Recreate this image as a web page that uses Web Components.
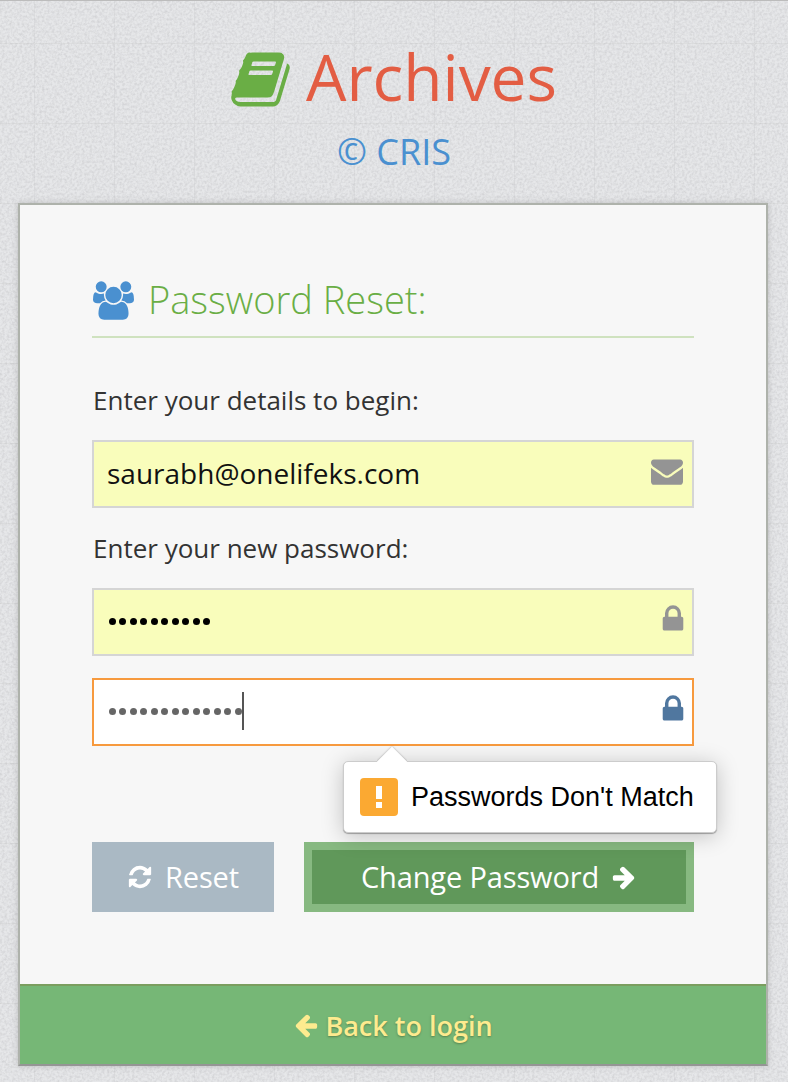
<!DOCTYPE html>
<html><head><meta charset="utf-8"><style>
html,body{margin:0;padding:0;height:100%}
body{font-family:"Open Sans",sans-serif}
</style></head><body>
<template id="t-ic"><style>:host{display:inline-flex;flex:none;line-height:0}svg{display:block;width:100%;height:100%;fill:currentColor}</style><svg><path></path></svg></template>
<template id="t-page"><style>
:host{display:block;box-sizing:border-box;width:788px;height:1082px;overflow:hidden;padding-top:1px;border-top:1px solid #bcbcbc;background-color:#e6e7e9;
background-image:url("data:image/svg+xml,%3Csvg xmlns='http://www.w3.org/2000/svg' width='400' height='400'%3E%3Cfilter id='n' x='0' y='0' width='100%25' height='100%25'%3E%3CfeTurbulence type='fractalNoise' baseFrequency='.4' numOctaves='2' stitchTiles='stitch'/%3E%3CfeColorMatrix values='0 0 0 0 .5 0 0 0 0 .5 0 0 0 0 .52 .9 0 0 0 -.32'/%3E%3C/filter%3E%3Crect width='400' height='400' filter='url(%23n)'/%3E%3C/svg%3E"),linear-gradient(#dddedf 1px,transparent 1px),linear-gradient(90deg,#dddee0 1px,transparent 1px);background-size:400px 400px,80px 80px,80px 80px;background-position:0 0,0 42px,34px 0}
</style><slot></slot></template>
<template id="t-brand"><style>
:host{display:flex;flex-direction:column;align-items:center;height:201px;box-sizing:border-box}
.row{display:flex;align-items:center;gap:14px;margin-top:29px;height:92px;color:#e35d43;font-size:64px;line-height:92px}
arc-icon{width:63px;height:63px;color:#6aae45;margin:4px 0 0 -2px}
.sub{color:#4a90d0;font-size:36px;line-height:48px;margin-top:5px}
</style><div class="row"><arc-icon name="book"></arc-icon><span>Archives</span></div><div class="sub">© CRIS</div></template>
<template id="t-card"><style>
:host{display:flex;flex-direction:column;box-sizing:border-box;width:750px;height:863px;margin:0 0 0 18px;background:#f7f7f7;border:2px solid #aeb2ab;border-bottom-color:#959595;box-shadow:0 0 6px rgba(120,120,120,.35)}
.body{flex:1;padding:0 72px;position:relative}
</style><div class="body"><slot></slot></div><slot name="foot"></slot></template>
<template id="t-head"><style>
:host{display:flex;align-items:center;gap:14px;height:133px;padding:65px 0 9px;box-sizing:border-box;border-bottom:2px solid #cfe2bf;color:#6aae45;font-size:38px;font-weight:300;line-height:48px}
arc-icon{width:41px;height:39px;color:#4a90d0;margin:4px 0 0 1px}
</style><arc-icon name="users"></arc-icon><span><slot></slot></span></template>
<template id="t-label"><style>
:host{display:block;font-size:26px;line-height:30px;height:32px;color:#333;padding-left:1px}
</style><slot></slot></template>
<template id="t-field"><style>
:host{display:flex;align-items:center;box-sizing:border-box;height:68px;border:2px solid #d5d5d5;background:#f9fdbb;padding:0 9px 0 13px;font-size:28px;color:#111}
:host([focus]){background:#fff;border-color:#f79a3e}
.v{flex:1;display:flex;align-items:center;gap:3.5px;padding-bottom:2px}
.d{width:7px;height:7px;border-radius:50%;background:#000}
.d:first-of-type{margin-left:1.5px}
:host([focus]) .d{background:#666}
.c{width:2px;height:38px;background:#555;margin-left:-3px}
arc-icon{color:#949494;width:32px;height:32px;margin-bottom:7px}
:host([icon=lock]) arc-icon{margin-right:-6px}
:host([focus]) arc-icon{color:#50779f}
</style><div class="v"><slot></slot></div><arc-icon></arc-icon></template>
<template id="t-tip"><style>
:host{display:flex;align-items:center;gap:13px;position:absolute;left:323px;top:556px;box-sizing:border-box;width:374px;height:72px;padding:0 16px;background:#fff;border:1px solid #ccc;border-radius:5px;box-shadow:0 3px 22px rgba(0,0,0,.22),0 1px 1px rgba(0,0,0,.3);font:27px "Liberation Sans",sans-serif;color:#000}
.a{position:absolute;left:33px;top:-17px;width:30px;height:17px;overflow:hidden}
.a i{display:block;position:absolute;left:4px;top:6px;width:22px;height:22px;background:#fff;transform:rotate(45deg);box-shadow:0 0 2px rgba(0,0,0,.35)}
.w{width:38px;height:38px;border-radius:4px;background:#fba932;display:flex;flex-direction:column;align-items:center;justify-content:center;gap:3px}
.w b{display:block;width:6px;background:#fff}
.w b:first-child{height:13px}.w b:last-child{height:6px}
</style><div class="a"><i></i></div><div class="w"><b></b><b></b></div><span><slot></slot></span></template>
<template id="t-btn"><style>
:host{display:flex;align-items:center;justify-content:center;box-sizing:border-box;height:70px;color:#fff;font-size:29px;gap:12px;background:#aab9c4;flex:none;letter-spacing:-.15px;padding-bottom:1px}
:host([primary]){background:#60985a;border:8px solid #87b981}
::slotted(arc-icon){width:26px;height:26px}
</style><slot></slot></template>
<template id="t-foot"><style>
:host{display:flex;align-items:center;justify-content:center;gap:6px;height:80px;box-sizing:border-box;background:#76b776;border-top:2px solid #7b9e5f;color:#fdeb8f;font-size:27px;font-weight:600;text-shadow:0 1px 2px rgba(60,80,40,.5)}
::slotted(arc-icon){width:26px;height:26px}
</style><slot></slot></template>
<script>
const P={
book:["0 0 1792 1792","M1703 478q40 57 18 129l-275 906q-19 64-76.5 107.5t-122.5 43.5h-923q-77 0-148.5-53.5t-99.5-131.5q-24-67-2-127 0-4 3-27t4-37q1-8-3-21.5t-3-19.5q2-11 8-21t16.5-23.5 16.5-23.5q23-38 45-91.5t30-91.5q3-10 .5-30t-.5-28q3-11 17-28t17-23q21-36 42-92t25-90q1-9-2.5-32t.5-28q4-13 22-30.5t22-22.5q19-26 42.5-84.5t27.5-96.5q1-8-3-25.5t-2-26.5q2-8 9-18t18-23 17-21q8-12 16.5-30.5t15-35 16-36 19.5-32 26.5-23.5 36-11.5 47.5 5.5l-1 3q38-9 51-9h761q74 0 114 56t18 130l-274 906q-36 119-71.5 153.5t-128.5 34.5h-869q-27 0-38 15-11 16-1 43 24 70 144 70h923q29 0 56-15.5t35-41.5l300-987q7-22 5-57 38 15 59 43zm-1064 2q-4 13 2 22.5t20 9.5h608q13 0 25.5-9.5t16.5-22.5l21-64q4-13-2-22.5t-20-9.5h-608q-13 0-25.5 9.5t-16.5 22.5zm-83 256q-4 13 2 22.5t20 9.5h608q13 0 25.5-9.5t16.5-22.5l21-64q4-13-2-22.5t-20-9.5h-608q-13 0-25.5 9.5t-16.5 22.5z"],
users:["0 0 1920 1792","M593 896q-162 5-265 128h-134q-82 0-138-40.5t-56-118.5q0-353 124-353 6 0 43.5 21t97.5 42.5 119 21.5q67 0 133-23-5 37-5 66 0 139 81 256zm1071 637q0 120-73 189.5t-194 69.5h-874q-121 0-194-69.5t-73-189.5q0-53 3.5-103.5t14-109 26.5-108.5 43-97.5 62-81 85.5-53.5 111.5-20q10 0 43 21.5t73 48 107 48 135 21.5 135-21.5 107-48 73-48 43-21.5q61 0 111.5 20t85.5 53.5 62 81 43 97.5 26.5 108.5 14 109 3.5 103.5zm-1024-1277q0 106-75 181t-181 75-181-75-75-181 75-181 181-75 181 75 75 181zm704 384q0 159-112.5 271.5t-271.5 112.5-271.5-112.5-112.5-271.5 112.5-271.5 271.5-112.5 271.5 112.5 112.5 271.5zm576 225q0 78-56 118.5t-138 40.5h-134q-103-123-265-128 81-117 81-256 0-29-5-66 66 23 133 23 59 0 119-21.5t97.5-42.5 43.5-21q124 0 124 353zm-128-609q0 106-75 181t-181 75-181-75-75-181 75-181 181-75 181 75 75 181z"],
envelope:["0 0 1792 1792","M1792 710v794q0 66-47 113t-113 47h-1472q-66 0-113-47t-47-113v-794q44 49 101 87 362 246 497 345 57 42 92.5 65.5t94.5 48 110 24.5h2q51 0 110-24.5t94.5-48 92.5-65.5q170-123 498-345 57-39 100-87zm0-294q0 79-49 151t-122 123q-376 261-468 325-10 7-42.5 30.5t-54 38-52 32.5-57.5 27-50 9h-2q-23 0-50-9t-57.5-27-52-32.5-54-38-42.5-30.5q-91-64-262-182.5t-205-142.5q-62-42-117-115.5t-55-136.5q0-78 41.5-130t118.5-52h1472q65 0 112.5 47t47.5 113z"],
lock:["0 0 1792 1792","M640 768h512v-192q0-106-75-181t-181-75-181 75-75 181v192zm832 96v576q0 40-28 68t-68 28h-960q-40 0-68-28t-28-68v-576q0-40 28-68t68-28h32v-192q0-184 132-316t316-132 316 132 132 316v192h32q40 0 68 28t28 68z"],
refresh:["0 0 1792 1792","M1639 1056q0 5-1 7-64 268-268 434.5t-478 166.5q-146 0-282.5-55t-243.5-157l-129 129q-19 19-45 19t-45-19-19-45v-448q0-26 19-45t45-19h448q26 0 45 19t19 45-19 45l-137 137q71 66 161 102t187 36q134 0 250-65t186-179q11-17 53-117 8-23 30-23h192q13 0 22.5 9.5t9.5 22.5zm25-800v448q0 26-19 45t-45 19h-448q-26 0-45-19t-19-45 19-45l138-138q-148-137-349-137-134 0-250 65t-186 179q-11 17-53 117-8 23-30 23h-199q-13 0-22.5-9.5t-9.5-22.5v-7q65-268 270-434.5t480-166.5q146 0 284 55.5t245 156.5l130-129q19-19 45-19t45 19 19 45z"],
right:["0 0 1792 1792","M1600 960q0 54-37 91l-651 651q-39 37-91 37-51 0-90-37l-75-75q-38-38-38-91t38-91l293-293h-704q-52 0-84.5-37.5t-32.5-90.5v-128q0-53 32.5-90.5t84.5-37.5h704l-293-294q-38-36-38-90t38-90l75-75q38-38 90-38 53 0 91 38l651 651q37 35 37 90z"],
left:["0 0 1792 1792","M1664 896v128q0 53-32.5 90.5t-84.5 37.5h-704l293 294q38 36 38 90t-38 90l-75 76q-37 37-90 37-52 0-91-37l-651-652q-37-37-37-90 0-52 37-91l651-650q38-38 91-38 52 0 90 38l75 74q38 38 38 91t-38 91l-293 293h704q52 0 84.5 37.5t32.5 90.5z"]};
class Base extends HTMLElement{constructor(tid){super();this.attachShadow({mode:"open"}).appendChild(document.getElementById(tid).content.cloneNode(true));}}
function def(tag,tid){customElements.define(tag,class extends Base{constructor(){super(tid)}})}
customElements.define("arc-icon",class extends Base{static get observedAttributes(){return["name"]}constructor(){super("t-ic")}attributeChangedCallback(){const p=P[this.getAttribute("name")];if(!p)return;const s=this.shadowRoot.querySelector("svg");s.setAttribute("viewBox",p[0]);s.querySelector("path").setAttribute("d",p[1]);}});
def("arc-page","t-page");def("arc-brand","t-brand");def("arc-card","t-card");def("arc-head","t-head");def("arc-label","t-label");def("arc-tip","t-tip");def("arc-btn","t-btn");def("arc-foot","t-foot");
customElements.define("arc-field",class extends Base{constructor(){super("t-field")}connectedCallback(){const r=this.shadowRoot;r.querySelector("arc-icon").setAttribute("name",this.getAttribute("icon"));const c=+this.getAttribute("dots")||0,v=r.querySelector(".v");for(let k=0;k<c;k++){const d=document.createElement("span");d.className="d";v.appendChild(d)}if(this.hasAttribute("focus")){const d=document.createElement("span");d.className="c";v.appendChild(d)}}});
</script>
<arc-page>
<arc-brand></arc-brand>
<arc-card>
<arc-head>Password Reset:</arc-head>
<arc-label style="margin-top:47px">Enter your details to begin:</arc-label>
<arc-field icon="envelope" style="margin-top:23px">saurabh@onelifeks.com</arc-field>
<arc-label style="margin-top:25px">Enter your new password:</arc-label>
<arc-field icon="lock" dots="10" style="margin-top:23px"></arc-field>
<arc-field icon="lock" dots="13" focus style="margin-top:22px"></arc-field>
<arc-tip>Passwords Don't Match</arc-tip>
<div style="display:flex;gap:30px;margin-top:96px">
<arc-btn style="width:182px"><arc-icon name="refresh"></arc-icon><span>Reset</span></arc-btn>
<arc-btn primary style="width:390px"><span>Change Password</span><arc-icon name="right"></arc-icon></arc-btn>
</div>
<arc-foot slot="foot"><arc-icon name="left"></arc-icon><span>Back to login</span></arc-foot>
</arc-card>
</arc-page>
</body></html>
